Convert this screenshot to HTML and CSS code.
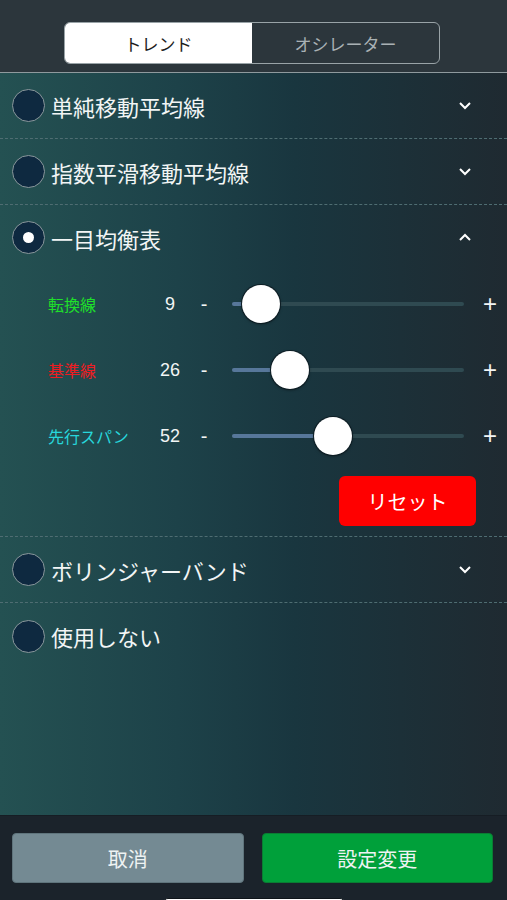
FILE: index.html
```html
<!DOCTYPE html>
<html lang="ja">
<head>
  <meta charset="UTF-8" />
  <meta name="viewport" content="width=device-width, initial-scale=1.0" />
  <title>インジケーター設定</title>
  <link rel="stylesheet" href="styles.css">
</head>
<body>
  <header class="top">
    <div class="tabs">
      <div class="tab active">トレンド</div>
      <div class="tab">オシレーター</div>
    </div>
  </header>

  <section class="list">
    <div class="row">
      <span class="radio"></span>
      <span class="name">単純移動平均線</span>
      <svg class="chev" width="14" height="9" viewBox="0 0 14 9"><polyline points="2,2 7,7 12,2" /></svg>
    </div>
    <div class="row">
      <span class="radio"></span>
      <span class="name">指数平滑移動平均線</span>
      <svg class="chev" width="14" height="9" viewBox="0 0 14 9"><polyline points="2,2 7,7 12,2" /></svg>
    </div>
    <div class="group">
      <div class="row nb">
        <span class="radio on"></span>
        <span class="name">一目均衡表</span>
        <svg class="chev" width="14" height="9" viewBox="0 0 14 9"><polyline points="2,7 7,2 12,7" /></svg>
      </div>
      <div class="param">
        <span class="plabel green">転換線</span>
        <span class="val">9</span>
        <span class="step">-</span>
        <div class="track"><div class="fill" style="width:29px"></div><div class="thumb" style="left:10px"></div></div>
        <span class="step plus">+</span>
      </div>
      <div class="param">
        <span class="plabel red">基準線</span>
        <span class="val">26</span>
        <span class="step">-</span>
        <div class="track"><div class="fill" style="width:58px"></div><div class="thumb" style="left:39px"></div></div>
        <span class="step plus">+</span>
      </div>
      <div class="param">
        <span class="plabel cyan">先行スパン</span>
        <span class="val">52</span>
        <span class="step">-</span>
        <div class="track"><div class="fill" style="width:101px"></div><div class="thumb" style="left:82px"></div></div>
        <span class="step plus">+</span>
      </div>
      <div class="reset-wrap">
        <button class="reset">リセット</button>
      </div>
    </div>
    <div class="row">
      <span class="radio"></span>
      <span class="name">ボリンジャーバンド</span>
      <svg class="chev" width="14" height="9" viewBox="0 0 14 9"><polyline points="2,2 7,7 12,2" /></svg>
    </div>
    <div class="row nb">
      <span class="radio"></span>
      <span class="name">使用しない</span>
    </div>
  </section>

  <footer class="bottom">
    <div class="btns">
      <button class="btn cancel">取消</button>
      <button class="btn ok">設定変更</button>
    </div>
    <div class="home"></div>
  </footer>
</body>
</html>
```

FILE: styles.css
```css
* {
  margin: 0;
  padding: 0;
  box-sizing: border-box;
}

body {
  font-family: "Noto Sans CJK JP", "Noto Sans", sans-serif;
  width: 507px;
  height: 900px;
  overflow: hidden;
  background: #1b232b;
  color: #f2f5f5;
}

.top {
  height: 73px;
  background: #2c363c;
  border-bottom: 1px solid #8f9a9e;
  padding-top: 22px;
  display: flex;
  justify-content: center;
}

.tabs {
  width: 376px;
  height: 42px;
  margin-left: -3px;
  display: flex;
  border: 1px solid #99a3a7;
  border-radius: 6px;
  overflow: hidden;
}

.tab {
  flex: 1;
  display: flex;
  align-items: center;
  justify-content: center;
  font-size: 17px;
  color: #a9b1b4;
}

.tab.active {
  background: #fff;
  color: #1c1c1c;
}

.list {
  height: 742px;
  background: linear-gradient(to right, #245152 0%, #1d4249 35%, #19363f 58%, #1f2a31 100%);
}

.row {
  height: 66px;
  display: flex;
  align-items: center;
  padding-left: 12px;
  border-bottom: 1px dashed #4f6d72;
}

.row.nb {
  border-bottom: none;
}

.group {
  border-bottom: 1px dashed #4f6d72;
}

.group .row {
  height: 65px;
}

.radio {
  width: 33px;
  height: 33px;
  border-radius: 50%;
  background: #0e2940;
  border: 1.5px solid #8a989c;
  display: flex;
  align-items: center;
  justify-content: center;
}

.radio.on::after {
  content: "";
  width: 11px;
  height: 11px;
  border-radius: 50%;
  background: #fff;
}

.name {
  margin-left: 6px;
  font-size: 22px;
  flex: 1;
}

.chev {
  margin-right: 35px;
  fill: none;
  stroke: #fff;
  stroke-width: 2;
}

.param {
  height: 66px;
  display: flex;
  align-items: center;
  padding-left: 48px;
  padding-top: 2px;
}

.plabel {
  width: 100px;
  font-size: 16px;
}

.green { color: #1fe02a; }
.red { color: #ee1c22; }
.cyan { color: #27d7dc; }

.val {
  width: 44px;
  text-align: center;
  font-family: "Liberation Sans", sans-serif;
  font-size: 18px;
}

.step {
  width: 24px;
  text-align: center;
  font-family: "Liberation Sans", sans-serif;
  font-size: 20px;
}

.step.plus {
  width: 16px;
  margin-left: 18px;
  font-size: 24px;
}

.track {
  position: relative;
  width: 232px;
  height: 4px;
  margin-left: 16px;
  border-radius: 2px;
  background: #2f4a51;
}

.fill {
  height: 4px;
  border-radius: 2px;
  background: #57779a;
}

.thumb {
  position: absolute;
  top: -17px;
  width: 38px;
  height: 38px;
  border-radius: 50%;
  background: #fff;
  box-shadow: 0 0 0 1px #0d1d24, 0 1px 3px rgba(0, 0, 0, 0.5);
}

.reset-wrap {
  display: flex;
  justify-content: flex-end;
  padding: 8px 31px 10px 0;
}

.reset {
  width: 137px;
  height: 50px;
  border: 0;
  border-radius: 6px;
  background: #ff0000;
  color: #fff;
  font-family: "Noto Sans CJK JP", sans-serif;
  font-size: 20px;
}

.bottom {
  height: 85px;
  background: #1b232b;
  border-top: 1px solid #161d24;
}

.btns {
  display: flex;
  gap: 18px;
  padding: 17px 14px 0 12px;
}

.btn {
  flex: 1;
  height: 50px;
  border-radius: 4px;
  font-family: "Noto Sans CJK JP", sans-serif;
  font-size: 20px;
  color: #eef3f3;
}

.cancel {
  background: #748a93;
  border: 1px solid #5f747c;
}

.ok {
  background: #00a03a;
  border: 1px solid #0a7d33;
}

.home {
  width: 182px;
  height: 14px;
  margin: 15px auto 0;
  background: #fff;
  border: 1px solid #0f151a;
  border-radius: 5px;
}
```
